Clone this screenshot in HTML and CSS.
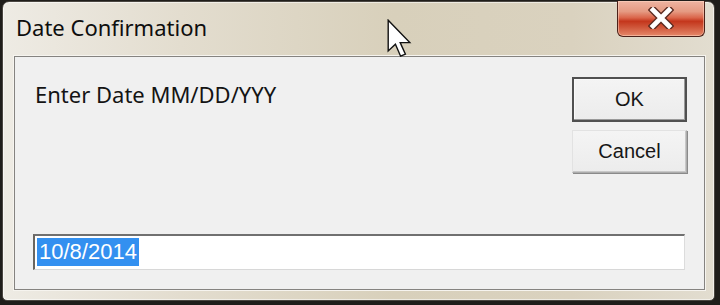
FILE: index.html
```html
<!DOCTYPE html>
<html>
<head>
<meta charset="utf-8">
<link rel="stylesheet" href="styles.css">
</head>
<body>
<div class="window">
  <div class="titlebar">
    <span class="title">Date Confirmation</span>
    <div class="close">
      <svg width="26" height="22" viewBox="0 0 26 22">
        <path d="M5 3 L21 19 M21 3 L5 19" stroke="#5a2a20" stroke-width="7.5" stroke-linecap="square" fill="none"/>
        <path d="M5 3 L21 19 M21 3 L5 19" stroke="#ffffff" stroke-width="4.8" stroke-linecap="square" fill="none"/>
      </svg>
    </div>
  </div>
  <div class="client">
    <div class="toprow">
      <p class="prompt">Enter Date MM/DD/YYY</p>
      <div class="buttons">
        <div class="btn default">OK</div>
        <div class="btn">Cancel</div>
      </div>
    </div>
    <div class="field"><span class="sel">10/8/2014</span></div>
  </div>
  <svg class="cursor" width="28" height="40" viewBox="0 0 14 20">
    <path d="M0.6 0.6 V16 L4.2 12.6 L6.8 18.6 L9.2 17.6 L6.6 11.8 H11.4 Z" fill="#ffffff" stroke="#111111" stroke-width="0.7" stroke-linejoin="miter"/>
  </svg>
</div>
</body>
</html>
```
FILE: styles.css
```css
html, body {
  margin: 0;
  padding: 0;
}
body {
  width: 720px;
  height: 305px;
  overflow: hidden;
  background: #1f1d1a;
}
.window {
  position: relative;
  box-sizing: border-box;
  margin: 1px 0 0 2px;
  width: 713px;
  height: 300px;
  border: 1px solid #4a4640;
  border-radius: 7px 7px 5px 5px;
  padding: 0 9px 10px 11px;
  display: flex;
  flex-direction: column;
  background: linear-gradient(90deg, #eeebe4 0%, #e3ddcf 25%, #d8d0bb 55%, #dad2bf 80%, #e2ddd0 100%);
  box-shadow: inset 0 0 0 1px rgba(255,255,255,0.55);
}
.titlebar {
  height: 54px;
  display: flex;
  align-items: flex-start;
  justify-content: space-between;
}
.title {
  font-family: "Noto Sans", "Open Sans", sans-serif;
  font-size: 22px;
  line-height: 28px;
  color: #0e0e0e;
  margin: 11px 0 0 2px;
}
.close {
  margin-top: -1px;
  width: 88px;
  height: 36px;
  box-sizing: border-box;
  border: 1px solid #4b2119;
  border-top: none;
  border-radius: 0 0 6px 6px;
  background: linear-gradient(180deg, #eeb4a2 0%, #e59a82 30%, #da654a 48%, #c4361c 58%, #cf563a 75%, #e5886a 100%);
  box-shadow: inset 0 0 0 1px rgba(255,220,200,0.5);
  display: flex;
  align-items: center;
  justify-content: center;
}
.close svg {
  display: block;
  margin-top: -2px;
}
.client {
  box-sizing: border-box;
  height: 234px;
  border: 1px solid #858380;
  box-shadow: 0 0 0 1px #f6f4ef;
  background: #f0f0f0;
  padding: 20px 17px 19px 18px;
  display: flex;
  flex-direction: column;
}
.toprow {
  display: flex;
  justify-content: space-between;
  align-items: flex-start;
}
.prompt {
  margin: 3px 0 0 2px;
  font-family: "Noto Sans", "Open Sans", sans-serif;
  font-size: 22px;
  line-height: 28px;
  color: #141414;
}
.buttons {
  display: flex;
  flex-direction: column;
  gap: 8px;
}
.btn {
  box-sizing: border-box;
  width: 115px;
  height: 43px;
  display: flex;
  align-items: center;
  justify-content: center;
  font-family: "Liberation Sans", Arial, sans-serif;
  font-size: 20px;
  color: #161616;
  background: linear-gradient(180deg, #f4f4f4 0%, #ececec 100%);
  border: 1px solid #adadad;
  border-top-color: #e2e2e2;
  border-left-color: #e2e2e2;
  box-shadow: 1px 1px 0 #8a8a8a, inset -1px -1px 0 #c8c8c8;
}
.btn.default {
  height: 45px;
  border: 2px solid #505050;
  box-shadow: inset -1px -1px 0 #9a9a9a, inset 1px 1px 0 #fafafa;
}
.field {
  margin-top: auto;
  margin-right: 2px;
  box-sizing: border-box;
  height: 36px;
  background: #ffffff;
  border-top: 2px solid #707070;
  border-left: 2px solid #6a6660;
  border-right: 1px solid #dcdcdc;
  border-bottom: 1px solid #d8d8d8;
  padding: 2px 0 0 2px;
  display: flex;
  align-items: flex-start;
}
.sel {
  display: inline-block;
  background: #3390f0;
  color: #ffffff;
  font-family: "Liberation Sans", Arial, sans-serif;
  font-size: 22px;
  line-height: 28px;
  padding: 0 2px 0 2px;
}
.cursor {
  position: absolute;
  left: 384px;
  top: 17px;
}
```
